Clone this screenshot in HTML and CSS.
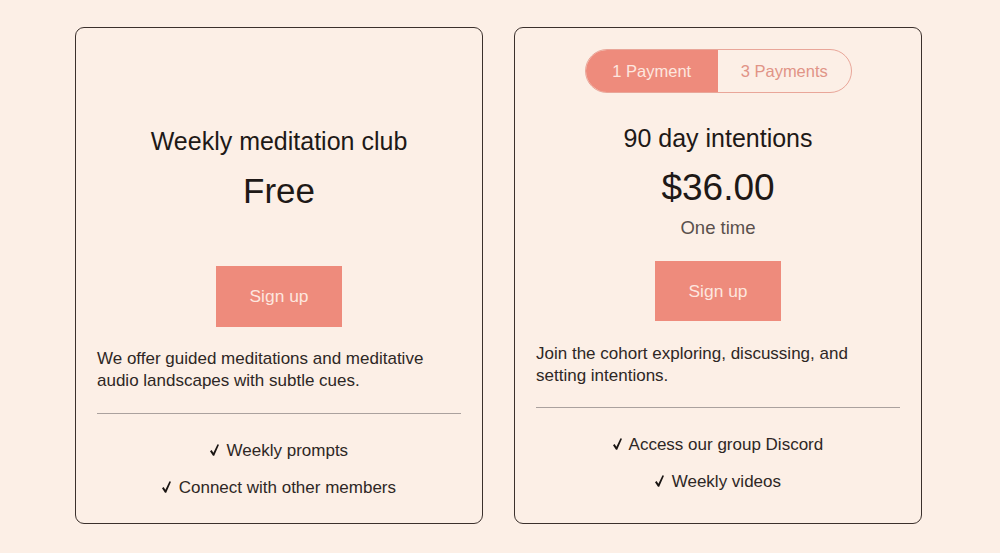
FILE: index.html
```html
<!DOCTYPE html>
<html>
<head>
<meta charset="utf-8">
<link rel="stylesheet" href="styles.css">
</head>
<body>
<main class="plans">
  <section class="card card-free">
    <h2 class="title">Weekly meditation club</h2>
    <div class="price price-free">Free</div>
    <a class="btn btn-free">Sign up</a>
    <p class="desc">We offer guided meditations and meditative audio landscapes with subtle cues.</p>
    <hr class="divider">
    <ul class="features">
      <li><svg class="check" viewBox="0 0 9 12" width="9" height="12"><path d="M0 7.2 L1.6 6.1 L3.4 8.8 L7.5 0.2 L9 0.8 L4.2 11.8 L3 11.8 Z"/></svg> Weekly prompts</li>
      <li><svg class="check" viewBox="0 0 9 12" width="9" height="12"><path d="M0 7.2 L1.6 6.1 L3.4 8.8 L7.5 0.2 L9 0.8 L4.2 11.8 L3 11.8 Z"/></svg> Connect with other members</li>
    </ul>
  </section>
  <section class="card card-paid">
    <div class="toggle">
      <span class="opt opt-active">1 Payment</span>
      <span class="opt">3 Payments</span>
    </div>
    <h2 class="title">90 day intentions</h2>
    <div class="price">$36.00</div>
    <div class="note">One time</div>
    <a class="btn btn-paid">Sign up</a>
    <p class="desc desc-paid">Join the cohort exploring, discussing, and setting intentions.</p>
    <hr class="divider">
    <ul class="features">
      <li><svg class="check" viewBox="0 0 9 12" width="9" height="12"><path d="M0 7.2 L1.6 6.1 L3.4 8.8 L7.5 0.2 L9 0.8 L4.2 11.8 L3 11.8 Z"/></svg> Access our group Discord</li>
      <li><svg class="check" viewBox="0 0 9 12" width="9" height="12"><path d="M0 7.2 L1.6 6.1 L3.4 8.8 L7.5 0.2 L9 0.8 L4.2 11.8 L3 11.8 Z"/></svg> Weekly videos</li>
    </ul>
  </section>
</main>
</body>
</html>
```
FILE: styles.css
```css
html, body {
  margin: 0;
  padding: 0;
  background: #fcefe6;
}
body {
  font-family: "Liberation Sans", Arial, sans-serif;
  color: #1e1917;
  width: 1000px;
  height: 553px;
  overflow: hidden;
}
.plans {
  display: flex;
  gap: 31px;
  padding: 27px 0 0 75px;
}
.card {
  box-sizing: border-box;
  width: 408px;
  height: 497px;
  border: 1.3px solid #3b302c;
  border-radius: 9px;
  padding: 0 21px;
  display: flex;
  flex-direction: column;
  align-items: center;
}
.card-free {
  padding-top: 98px;
}
.card-paid {
  padding-top: 21px;
}
.toggle {
  display: flex;
  width: 267px;
  height: 44px;
  box-sizing: border-box;
  border: 1.3px solid #e9a699;
  border-radius: 22px;
  overflow: hidden;
  margin-bottom: 30px;
}
.opt {
  flex: 1;
  display: flex;
  align-items: center;
  justify-content: center;
  font-size: 16.5px;
  color: #e19486;
}
.opt-active {
  background: #ee8b7c;
  color: #fde6df;
}
.title {
  margin: 0;
  font-weight: 400;
  font-size: 25px;
  line-height: 30px;
}
.price {
  font-size: 37px;
  line-height: 44px;
  margin-top: 13px;
}
.price-free {
  font-size: 35px;
}
.note {
  font-size: 18.5px;
  line-height: 24px;
  margin-top: 6px;
  color: #5a504c;
}
.btn {
  display: flex;
  align-items: center;
  justify-content: center;
  width: 126px;
  height: 61px;
  background: #ee8b7c;
  color: #fde6df;
  font-size: 17.4px;
  margin-top: 53px;
}
.btn-paid {
  margin-top: 21px;
  height: 60px;
}
.desc {
  align-self: stretch;
  margin: 21px 0 0;
  font-size: 17px;
  line-height: 22px;
  color: #2e2725;
}
.desc-paid {
  margin-top: 22px;
}
.divider {
  align-self: stretch;
  border: 0;
  border-top: 1px solid #aaa19e;
  margin: 21px 0 0;
}
.desc-paid + .divider {
  margin-top: 20px;
}
.features {
  list-style: none;
  margin: 26px 0 0;
  padding: 0;
  text-align: center;
}
.features li {
  font-size: 17px;
  line-height: 22px;
  margin-bottom: 15px;
  color: #2e2725;
}
.check {
  fill: #1a1513;
  vertical-align: 0;
  margin-right: 3px;
}
```
